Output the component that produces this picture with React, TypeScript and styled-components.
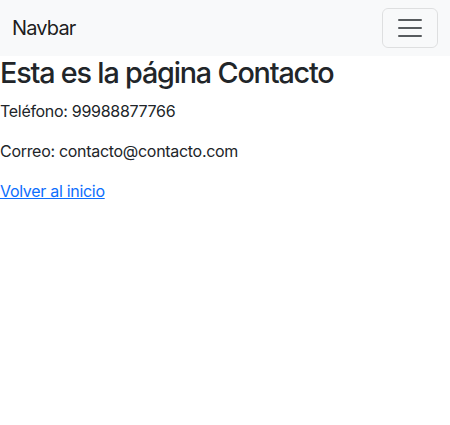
import React from "react";
import styled, { createGlobalStyle } from "styled-components";

const GlobalStyle = createGlobalStyle`
  *, *::before, *::after { box-sizing: border-box; }
  body {
    margin: 0;
    font-family: Inter, "Liberation Sans", Arial, sans-serif;
    font-size: 16px;
    line-height: 1.5;
    letter-spacing: -0.3px;
    color: #212529;
    background: #fff;
  }
`;

const Nav = styled.nav`
  background: #f8f9fa;
  padding: 8px 0;
`;

const NavInner = styled.div`
  display: flex;
  align-items: center;
  justify-content: space-between;
  padding: 0 12px;
`;

const Brand = styled.a`
  font-size: 20px;
  line-height: 1.5;
  letter-spacing: -0.85px;
  padding: 5px 0;
  color: rgba(0, 0, 0, 0.9);
  text-decoration: none;
`;

const Toggler = styled.button`
  display: flex;
  align-items: center;
  justify-content: center;
  padding: 4px 12px;
  background: transparent;
  border: 1px solid rgba(0, 0, 0, 0.1);
  border-radius: 6px;
  line-height: 1;
  cursor: pointer;
`;

const Title = styled.h1`
  margin: 0 0 8px;
  font-size: 28.75px;
  font-weight: 500;
  line-height: 1.2;
  letter-spacing: -1.18px;
`;

const Para = styled.p`
  margin: 0 0 16px;
`;

const Link = styled.a`
  color: #0d6efd;
  text-decoration: underline;
`;

export default function App() {
  return (
    <>
      <GlobalStyle />
      <Nav>
        <NavInner>
          <Brand href="#">Navbar</Brand>
          <Toggler aria-label="Toggle navigation">
            <svg width="30" height="30" viewBox="0 0 30 30">
              <path
                d="M4 7h22M4 15h22M4 23h22"
                stroke="rgba(33,37,41,0.75)"
                strokeWidth="2"
                strokeLinecap="round"
                strokeMiterlimit="10"
              />
            </svg>
          </Toggler>
        </NavInner>
      </Nav>
      <Title>Esta es la página Contacto</Title>
      <Para>Teléfono: 99988877766</Para>
      <Para>Correo: contacto@contacto.com</Para>
      <Link href="#">Volver al inicio</Link>
    </>
  );
}
